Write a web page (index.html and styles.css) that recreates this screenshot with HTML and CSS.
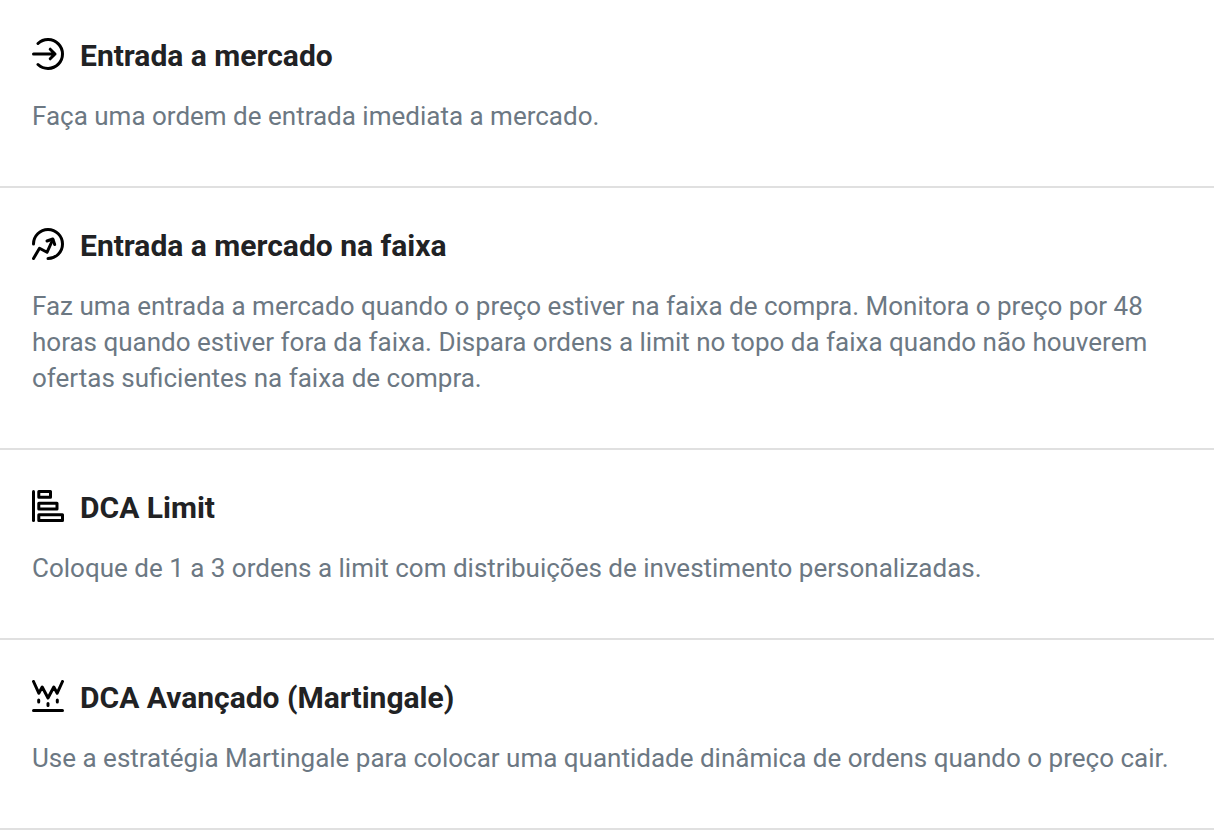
FILE: index.html
```html
<!DOCTYPE html>
<html lang="pt-BR">

<head>
  <meta charset="UTF-8" />
  <meta name="viewport" content="width=device-width, initial-scale=1.0" />
  <title>Estratégias de entrada</title>
  <link rel="stylesheet" href="styles.css">
</head>

<body>
  <ul class="strategy-list">
    <li class="strategy">
      <div class="strategy-header">
        <svg class="icon" viewBox="0 0 32 32" aria-hidden="true">
          <path d="M6 5.5A14.5 14.5 0 1 1 6 26.5" />
          <path d="M1.5 16H23M18.2 11.2L23 16L18.2 20.8" />
        </svg>
        <h2>Entrada a mercado</h2>
      </div>
      <p>Faça uma ordem de entrada imediata a mercado.</p>
    </li>

    <li class="strategy">
      <div class="strategy-header">
        <svg class="icon" viewBox="0 0 32 32" aria-hidden="true">
          <path d="M1.5 16A14.5 14.5 0 1 1 16 30.5" />
          <path d="M1.5 30.5L7.5 20.3L15 24.3L20.8 11.5" />
          <path d="M15 13L20.8 11L22.7 16.5" />
        </svg>
        <h2>Entrada a mercado na faixa</h2>
      </div>
      <p>Faz uma entrada a mercado quando o preço estiver na faixa de compra. Monitora o preço por 48 horas quando estiver fora da faixa. Dispara ordens a limit no topo da faixa quando não houverem ofertas suficientes na faixa de compra.</p>
    </li>

    <li class="strategy">
      <div class="strategy-header">
        <svg class="icon" viewBox="0 0 32 32" aria-hidden="true">
          <path d="M1.5 1.5V30.5" />
          <path d="M6.8 1.5H18.5V7.2H6.8Z" />
          <path d="M6.8 13.2H25V19H6.8Z" />
          <path d="M6.8 24.8H30.5V30.5H6.8Z" />
        </svg>
        <h2>DCA Limit</h2>
      </div>
      <p>Coloque de 1 a 3 ordens a limit com distribuições de investimento personalizadas.</p>
    </li>

    <li class="strategy">
      <div class="strategy-header">
        <svg class="icon" viewBox="0 0 32 32" aria-hidden="true">
          <path d="M1.5 1.5L6.8 13.2L10.2 7L16 18L21.8 7L25.2 13.2L30.5 1.5" />
          <path d="M6.7 20V22M16 23.5V25.5M25.3 20V22" />
          <path d="M1.5 30.5H30.5" />
        </svg>
        <h2>DCA Avançado (Martingale)</h2>
      </div>
      <p>Use a estratégia Martingale para colocar uma quantidade dinâmica de ordens quando o preço cair.</p>
    </li>
  </ul>
</body>

</html>
```

FILE: styles.css
```css
/* Base Styles */
* {
  box-sizing: border-box;
  margin: 0;
  padding: 0;
}

body {
  font-family: Roboto, sans-serif;
  background-color: #fff;
  color: #212224;
}

/* Strategy list */
.strategy-list {
  list-style: none;
}

.strategy {
  padding: 40px 32px 52px;
  border-bottom: 2px solid #e0e0e0;
}

.strategy:first-child {
  padding-top: 38px;
}

.strategy-header {
  display: flex;
  align-items: flex-start;
  gap: 16px;
  margin-bottom: 24px;
}

.strategy h2 {
  font-size: 30px;
  font-weight: 700;
  line-height: 36px;
}

.strategy p {
  color: #6c7883;
  font-size: 26px;
  line-height: 36px;
}

/* Icons */
.icon {
  flex-shrink: 0;
  width: 32px;
  height: 32px;
  fill: none;
  stroke: #000;
  stroke-width: 3;
  stroke-linecap: round;
  stroke-linejoin: round;
}
```
